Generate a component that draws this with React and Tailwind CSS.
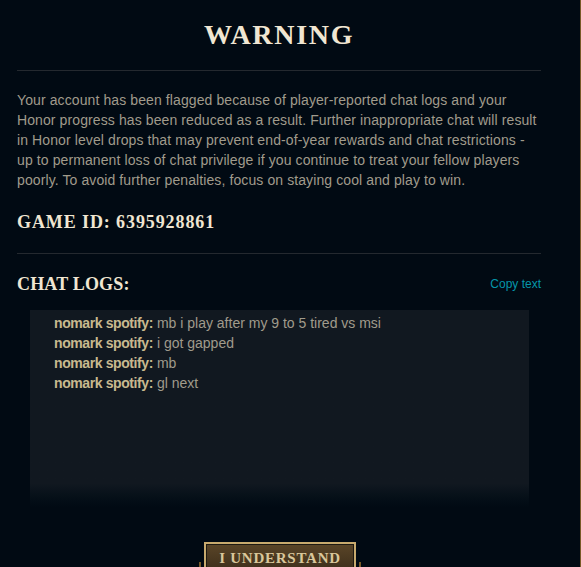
export default function App() {
  const lines = [
    "mb i play after my 9 to 5 tired vs msi",
    "i got gapped",
    "mb",
    "gl next",
  ];
  const serif = { fontFamily: '"Liberation Serif", "DejaVu Serif", serif' };
  const sans = { fontFamily: '"Liberation Sans", Arial, sans-serif' };
  return (
    <div className="w-[581px] h-[567px] overflow-hidden bg-[#010a13] border-r border-[#785a28]">
      <div className="px-[17px] pr-[39px]">
        <h1
          style={serif}
          className="pt-[17px] text-center text-[28px] leading-[36px] font-bold tracking-[0.06em] text-[#f0e6d2]"
        >
          WARNING
        </h1>
        <div className="mt-[17px] h-px bg-[#24292f]" />
        <p
          style={sans}
          className="mt-[19px] text-[14px] leading-[20px] tracking-[0.1px] text-[#a09b8c]"
        >
          Your account has been flagged because of player-reported chat logs and your Honor progress has been reduced as a result. Further inappropriate chat will result in Honor level drops that may prevent end-of-year rewards and chat restrictions - up to permanent loss of chat privilege if you continue to treat your fellow players poorly. To avoid further penalties, focus on staying cool and play to win.
        </p>
        <div
          style={serif}
          className="mt-[20px] text-[18px] leading-[24px] font-bold tracking-[0.05em] text-[#f0e6d2]"
        >
          GAME ID: 6395928861
        </div>
        <div className="mt-[19px] h-px bg-[#24292f]" />
        <div className="mt-[18px] flex items-center justify-between">
          <span
            style={serif}
            className="text-[18px] leading-[24px] font-bold tracking-[0.01em] text-[#f0e6d2]"
          >
            CHAT LOGS:
          </span>
          <button style={sans} className="text-[12px] text-[#0596aa]">
            Copy text
          </button>
        </div>
      </div>
      <div
        style={sans}
        className="mt-[14px] ml-[30px] w-[499px] h-[197px] pt-[3px] pl-[24px] bg-gradient-to-b from-[#111820] from-[88%] to-[#010a13] text-[14px] leading-[20px]"
      >
        {lines.map((m, i) => (
          <div key={i}>
            <span className="font-bold tracking-[-0.4px] text-[#c8b98f]">nomark spotify:</span>{" "}
            <span className="text-[#a09b8c]">{m}</span>
          </div>
        ))}
      </div>
      <div className="mt-[35px] flex justify-center pr-[20px]">
        <div className="relative">
          <span className="absolute left-[-5px] top-[20px] h-[14px] w-[2px] bg-[#785a28]" />
          <span className="absolute right-[-5px] top-[20px] h-[14px] w-[2px] bg-[#785a28]" />
          <button
            style={serif}
            className="w-[152px] h-[34px] border-2 border-[#c8aa6e] bg-gradient-to-b from-[#5a4527] to-[#3a2c1a] shadow-[inset_0_0_0_1px_#1e1a12] text-[15px] font-bold tracking-[0.05em] text-[#d9c79b] pb-[1px]"
          >
            I UNDERSTAND
          </button>
        </div>
      </div>
    </div>
  );
}
